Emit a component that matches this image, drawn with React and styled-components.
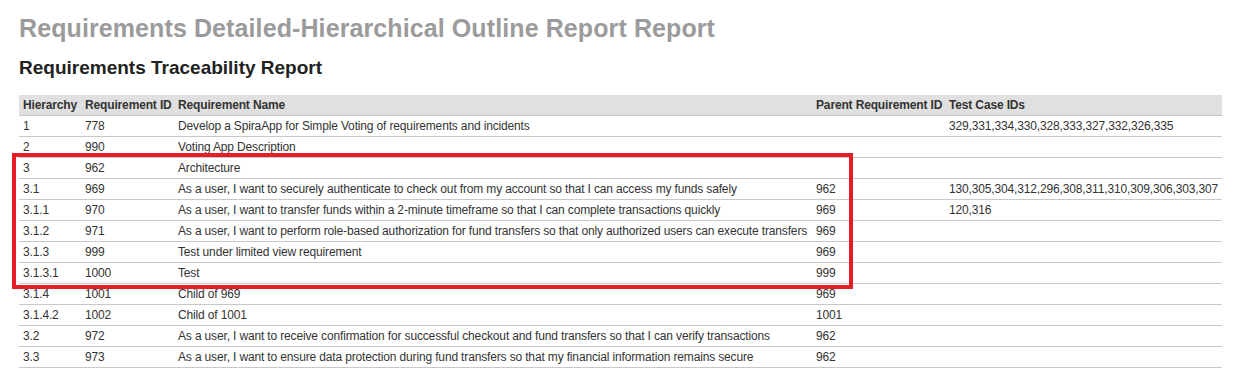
import styled, { createGlobalStyle } from "styled-components";

const GlobalStyle = createGlobalStyle`
  body {
    margin: 0;
    background: #fff;
    font-family: "Liberation Sans", Arial, sans-serif;
  }
`;

const Page = styled.div`
  padding: 14px 14px 0 19px;
`;

const Title = styled.h1`
  margin: 0;
  font-size: 25px;
  line-height: 28px;
  letter-spacing: 0.1px;
  font-weight: bold;
  color: #9b9b9b;
`;

const Subtitle = styled.h2`
  margin: 15px 0 0;
  font-size: 19px;
  line-height: 22px;
  font-weight: bold;
  color: #222;
`;

const TableWrap = styled.div`
  position: relative;
  margin-top: 16px;
`;

const Table = styled.table`
  width: 1203px;
  border-collapse: collapse;
  table-layout: fixed;
  font-size: 12px;
  letter-spacing: -0.15px;
  color: #333;
`;

const HeadCell = styled.th`
  background: #e0e0e0;
  text-align: left;
  font-weight: bold;
  padding: 0 4px;
  height: 20px;
  line-height: 20px;
  white-space: nowrap;
  border-bottom: 1px solid #c4c4c4;
`;

const Cell = styled.td`
  padding: 0 4px;
  height: 20px;
  line-height: 20px;
  white-space: nowrap;
  border-bottom: 1px solid #c8c8c8;
`;

// red annotation drawn over rows 3 .. 3.1.3.1
const Highlight = styled.div`
  position: absolute;
  left: -7px;
  top: 58px;
  width: 841px;
  height: 136px;
  box-sizing: border-box;
  border: 4px solid #e31e26;
  pointer-events: none;
`;

const columns = [
  { label: "Hierarchy", width: 62 },
  { label: "Requirement ID", width: 93 },
  { label: "Requirement Name", width: 638 },
  { label: "Parent Requirement ID", width: 133 },
  { label: "Test Case IDs", width: 277 },
];

const rows = [
  ["1", "778", "Develop a SpiraApp for Simple Voting of requirements and incidents", "", "329,331,334,330,328,333,327,332,326,335"],
  ["2", "990", "Voting App Description", "", ""],
  ["3", "962", "Architecture", "", ""],
  ["3.1", "969", "As a user, I want to securely authenticate to check out from my account so that I can access my funds safely", "962", "130,305,304,312,296,308,311,310,309,306,303,307"],
  ["3.1.1", "970", "As a user, I want to transfer funds within a 2-minute timeframe so that I can complete transactions quickly", "969", "120,316"],
  ["3.1.2", "971", "As a user, I want to perform role-based authorization for fund transfers so that only authorized users can execute transfers", "969", ""],
  ["3.1.3", "999", "Test under limited view requirement", "969", ""],
  ["3.1.3.1", "1000", "Test", "999", ""],
  ["3.1.4", "1001", "Child of 969", "969", ""],
  ["3.1.4.2", "1002", "Child of 1001", "1001", ""],
  ["3.2", "972", "As a user, I want to receive confirmation for successful checkout and fund transfers so that I can verify transactions", "962", ""],
  ["3.3", "973", "As a user, I want to ensure data protection during fund transfers so that my financial information remains secure", "962", ""],
];

const App = () => {
  return (
    <Page>
      <GlobalStyle />
      <Title>Requirements Detailed-Hierarchical Outline Report Report</Title>
      <Subtitle>Requirements Traceability Report</Subtitle>
      <TableWrap>
        <Table>
          <colgroup>
            {columns.map((c) => (
              <col key={c.label} style={{ width: c.width }} />
            ))}
          </colgroup>
          <thead>
            <tr>
              {columns.map((c) => (
                <HeadCell key={c.label}>{c.label}</HeadCell>
              ))}
            </tr>
          </thead>
          <tbody>
            {rows.map((r) => (
              <tr key={r[0]}>
                {r.map((v, i) => (
                  <Cell key={i}>{v}</Cell>
                ))}
              </tr>
            ))}
          </tbody>
        </Table>
        <Highlight />
      </TableWrap>
    </Page>
  );
};

export default App;
